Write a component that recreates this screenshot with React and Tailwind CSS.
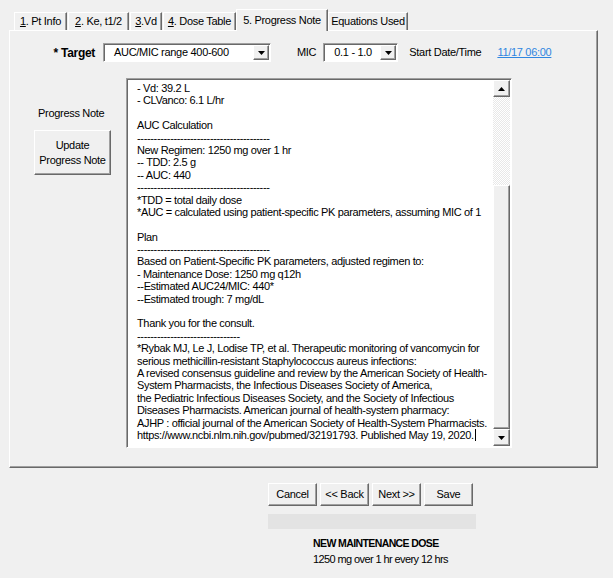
import React from 'react';

const raised =
  'border-t border-l border-t-white border-l-white border-r border-b border-r-[#696969] border-b-[#696969] shadow-[inset_-1px_-1px_0_#a0a0a0]';
const sunken =
  'border-t border-l border-t-[#a0a0a0] border-l-[#a0a0a0] border-r border-b border-r-white border-b-white shadow-[inset_1px_1px_0_#696969]';

const dash = '-'.repeat(40);

const lines = [
  '- Vd: 39.2 L',
  '- CLVanco: 6.1 L/hr',
  '',
  'AUC Calculation',
  dash,
  'New Regimen: 1250 mg over 1 hr',
  '-- TDD: 2.5 g',
  '-- AUC: 440',
  dash,
  '*TDD = total daily dose',
  '*AUC = calculated using patient-specific PK parameters, assuming MIC of 1',
  '',
  'Plan',
  dash,
  'Based on Patient-Specific PK parameters, adjusted regimen to:',
  '- Maintenance Dose: 1250 mg q12h',
  '--Estimated AUC24/MIC: 440*',
  '--Estimated trough: 7 mg/dL',
  '',
  'Thank you for the consult.',
  '-'.repeat(31),
  '*Rybak MJ, Le J, Lodise TP, et al. Therapeutic monitoring of vancomycin for',
  'serious methicillin-resistant Staphylococcus aureus infections:',
  'A revised consensus guideline and review by the American Society of Health-',
  'System Pharmacists, the Infectious Diseases Society of America,',
  'the Pediatric Infectious Diseases Society, and the Society of Infectious',
  'Diseases Pharmacists. American journal of health-system pharmacy:',
  'AJHP : official journal of the American Society of Health-System Pharmacists.',
];

const Arrow = ({ down }) => (
  <svg width="7" height="4" viewBox="0 0 7 4">
    <polygon points={down ? '0,0 7,0 3.5,4' : '0,4 7,4 3.5,0'} fill="#000" />
  </svg>
);

const Tab = ({ acc, rest, w }) => (
  <div className={`h-[18px] ${w} shrink-0 whitespace-nowrap flex items-center justify-center border-t border-l border-t-white border-l-white border-r border-r-[#696969] shadow-[inset_-1px_0_0_#a0a0a0] mt-[3px]`}>
    <span>
      {acc && <span className="underline">{acc}</span>}
      {rest}
    </span>
  </div>
);

const Combo = ({ w, value, pl }) => (
  <div className={`${w} h-[19px] bg-white flex items-center ${sunken}`}>
    <span className={`flex-1 ${pl}`}>{value}</span>
    <div className={`w-[16px] h-[15px] mr-[1px] bg-[#f0f0f0] flex items-center justify-center ${raised}`}>
      <Arrow down />
    </div>
  </div>
);

const Btn = ({ children }) => (
  <div className={`w-[49px] h-[23px] bg-[#f0f0f0] flex items-center justify-center ${raised}`}>{children}</div>
);

export default function App() {
  return (
    <div
      className="w-[613px] h-[578px] bg-[#f0f0f0] text-[11px] text-black leading-none overflow-hidden tracking-[-0.3px]"
      style={{ fontFamily: '"Liberation Sans", Arial, sans-serif' }}
    >
      <div className="pt-[9px] pl-[9px]">
        <div className="flex items-start pl-[5px] h-[21px]">
          <Tab acc="1" rest=". Pt Info" w="w-[53px]" />
          <div className="w-[1px]" />
          <Tab acc="2" rest=". Ke, t1/2" w="w-[61px]" />
          <div className="w-[1px]" />
          <Tab acc="3" rest=".Vd" w="w-[32px]" />
          <div className="w-[1px]" />
          <Tab acc="4" rest=". Dose Table" w="w-[73px]" />
          <div className="w-[92px] shrink-0 whitespace-nowrap h-[22px] -mb-[1px] relative z-10 bg-[#f0f0f0] flex items-start justify-center pt-[5px] border-t border-l border-t-white border-l-white border-r border-r-[#696969] shadow-[inset_-1px_0_0_#a0a0a0]">
            5. Progress Note
          </div>
          <Tab rest="Equations Used" w="w-[80px]" />
        </div>

        <div className="w-[589px] h-[438px] border-t border-l border-t-white border-l-white border-r border-b border-r-[#696969] border-b-[#696969] shadow-[inset_-1px_-1px_0_#a0a0a0]">
          <div className="flex items-center mt-[12px] h-[19px]">
            <div className="w-[85px] text-right font-bold text-[12px]">* Target</div>
            <div className="w-[8px]" />
            <Combo w="w-[168px]" value="AUC/MIC range 400-600" pl="pl-[10px]" />
            <div className="ml-[26px]">MIC</div>
            <div className="ml-[7px]">
              <Combo w="w-[75px]" value="0.1 - 1.0" pl="pl-[10px]" />
            </div>
            <div className="ml-[11px]">Start Date/Time</div>
            <div className="ml-[16px] text-[#2f86e0] underline">11/17 06:00</div>
          </div>

          <div className="flex mt-[16px]">
            <div className="w-[116px] flex flex-col items-start pl-[24px]">
              <div className="mt-[30px] pl-[4px]">Progress Note</div>
              <div className={`mt-[11px] w-[77px] h-[45px] bg-[#f0f0f0] flex flex-col items-center justify-center gap-[3px] leading-[12px] ${raised}`}>
                <span>Update</span>
                <span>Progress Note</span>
              </div>
            </div>

            <div className={`w-[386px] h-[370px] bg-white flex p-[1px] ${sunken}`}>
              <div className="flex-1 min-w-0 overflow-hidden pl-[9px] pt-[2px] leading-[12.4px] text-[11px] tracking-[-0.35px]">
                {lines.map((l, i) => (
                  <div key={i} className="whitespace-pre h-[12.4px]">
                    {l || ' '}
                  </div>
                ))}
                <div className="whitespace-pre h-[12.4px] flex items-center">
                  https://www.ncbi.nlm.nih.gov/pubmed/32191793. Published May 19, 2020.
                  <span className="inline-block w-[1px] h-[12px] bg-black ml-[1px]" />
                </div>
              </div>
              <div className="w-[17px] shrink-0 flex flex-col bg-[repeating-conic-gradient(#ffffff_0_25%,#e8e8e8_0_50%)] bg-[length:2px_2px]">
                <div className={`h-[17px] bg-[#f0f0f0] flex items-center justify-center ${raised}`}>
                  <Arrow />
                </div>
                <div className="h-[88px]" />
                <div className={`flex-1 bg-[#f0f0f0] ${raised}`} />
                <div className={`h-[17px] bg-[#f0f0f0] flex items-center justify-center ${raised}`}>
                  <Arrow down />
                </div>
              </div>
            </div>
          </div>
        </div>

        <div className="pl-[259px] mt-[15px]">
          <div className="flex gap-[3px]">
            <Btn>Cancel</Btn>
            <Btn>{'<< Back'}</Btn>
            <Btn>{'Next >>'}</Btn>
            <Btn>Save</Btn>
          </div>
          <div className="mt-[8px] w-[208px] h-[15px] bg-[#e3e3e3]" />
          <div className="pl-[45px] mt-[9px] font-bold text-[10.5px] tracking-[-0.6px] whitespace-nowrap">NEW MAINTENANCE DOSE</div>
          <div className="pl-[45px] mt-[5px] tracking-[-0.6px] whitespace-nowrap">1250 mg over 1 hr every 12 hrs</div>
        </div>
      </div>
    </div>
  );
}
